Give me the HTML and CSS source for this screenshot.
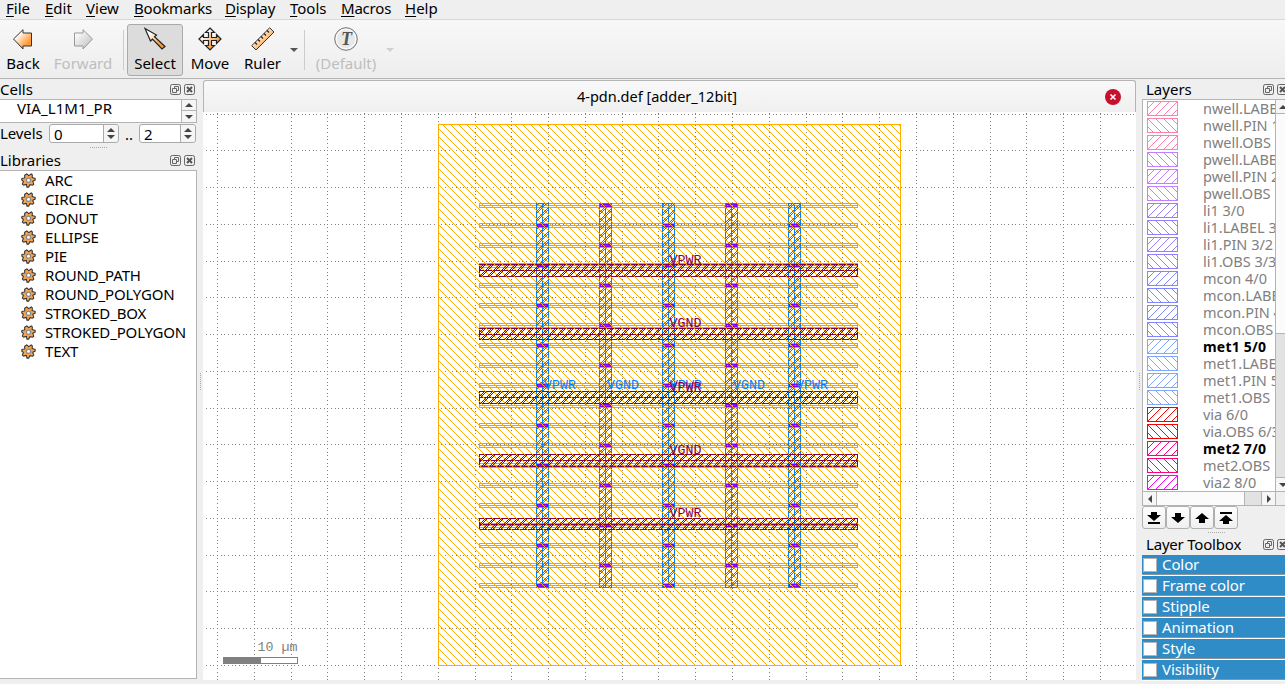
FILE: index.html
```
<!DOCTYPE html>
<html lang="en">
<head>
<meta charset="utf-8">
<title>4-pdn.def [adder_12bit]</title>
<link rel="stylesheet" href="styles.css">
</head>
<body>
<svg class="defs" width="0" height="0">
  <defs>
    <linearGradient id="og" x1="0" y1="0" x2="1" y2="1"><stop offset=".25" stop-color="#fff"/><stop offset=".75" stop-color="#ff9933"/></linearGradient>
    <linearGradient id="gg" x1="0" y1="0" x2="1" y2="1"><stop offset=".1" stop-color="#fff"/><stop offset="1" stop-color="#bbb"/></linearGradient>
    <symbol id="gear" viewBox="0 0 14 14"><path d="M5.4.8 7.2 2.5 9.6.9l1 .9-.2 2.4 2.8.8v1.6l-2.2 1.2.9 2.6-1 1-2.5-.5-1.3 2.3H5.6L5 10.7l-2.6.6-1.1-1 .9-2.4L.7 6.5l.2-1.4 2.6-.5-.1-2.5z" fill="#f5a452" stroke="#333" stroke-width="1"/><circle cx="7" cy="6.700" r="2" fill="#fff" stroke="#888" stroke-width="1.200"/></symbol>
    <symbol id="float" viewBox="0 0 11 11"><rect x=".5" y=".5" width="10" height="10" rx="1.8" fill="none" stroke="#666"/><path d="M4.5 4.5v-2h4v4h-2M2.5 4.5h4v4h-4z" fill="none" stroke="#666"/></symbol>
    <symbol id="close" viewBox="0 0 11 11"><rect x=".5" y=".5" width="10" height="10" rx="1.8" fill="none" stroke="#666"/><path d="M3 3l5 5M8 3l-5 5" fill="none" stroke="#555" stroke-width="2"/></symbol>
    <symbol id="fwd" viewBox="0 0 31 15"><path d="M1 7l6-6M1 14 14 1M9 14 22 1M17 14 30 1M25 14l5-5" fill="none" stroke="currentColor" shape-rendering="crispEdges"/><rect x=".5" y=".5" width="30" height="14" fill="none" stroke="currentColor"/></symbol>
    <symbol id="bwd" viewBox="0 0 31 15"><path d="M1 9l5 5M1 1l13 13M9 1l13 13M17 1l13 13M25 1l5 5" fill="none" stroke="currentColor" shape-rendering="crispEdges"/><rect x=".5" y=".5" width="30" height="14" fill="none" stroke="currentColor"/></symbol>
  </defs>
</svg>
<div class="app">
  <nav class="menu">
    <span class="m1"><u>F</u>ile</span><span class="m2"><u>E</u>dit</span><span class="m3"><u>V</u>iew</span><span class="m4"><u>B</u>ookmarks</span><span class="m5"><u>D</u>isplay</span><span class="m6"><u>T</u>ools</span><span class="m7"><u>M</u>acros</span><span class="m8"><u>H</u>elp</span>
  </nav>
  <div class="toolbar">
    <div class="tool back"><svg width="24" height="24"><path d="M2.5 12 12 2.7V6h8.5v13H12v3z" fill="url(#og)" stroke="#333"/></svg><span>Back</span></div>
    <div class="tool forward off"><svg width="24" height="24"><path d="M21.500 12 12 2.700V6H3.500v13H12v3z" fill="url(#gg)" stroke="#999"/></svg><span>Forward</span></div>
    <i class="sep"></i>
    <div class="tool select"><svg width="24" height="24"><path d="M2 1.500 13.500 8 11.500 9.800 22 19.500 19 22 9.500 12.200 7.500 14z" fill="url(#og)" stroke="#222" stroke-width="1.200"/></svg><span>Select</span></div>
    <div class="tool move"><svg width="24" height="24"><path d="M12 1l4.500 4.500h-3v5h5v-3L23 12l-4.500 4.500v-3h-5v5h3L12 23l-4.500-4.500h3v-5h-5v3L1 12l4.500-4.500v3h5v-5h-3z" fill="url(#og)" stroke="#222" stroke-width="1.200"/></svg><span>Move</span></div>
    <div class="tool ruler"><svg width="24" height="24"><path d="M.700 18.700 18.700.800 23 5 5 23z" fill="url(#og)" stroke="#333"/><path d="M4 15.500l2 2M7 12.500l2 2M10 9.500l2 2M13 6.500l2 2M16 3.500l2 2" stroke="#222" stroke-width="1.200"/></svg><span>Ruler</span></div>
    <i class="drop"></i>
    <i class="sep sep2"></i>
    <div class="tool default off"><svg width="26" height="26"><circle cx="13" cy="13" r="11.300" fill="#e8e8e8" stroke="#777"/><circle cx="13" cy="13" r="9.700" fill="none" stroke="#fff"/><text x="13.500" y="19" class="tee">T</text></svg><span>(Default)</span></div>
    <i class="drop pale"></i>
  </div>
  <div class="main">
    <aside class="left">
      <div class="title t1"><span>Cells</span><svg width="11" height="11"><use href="#float"/></svg><svg width="11" height="11"><use href="#close"/></svg></div>
      <div class="cells"><span>VIA_L1M1_PR</span><div class="updown"><b><i class="up"></i></b><b><i class="down"></i></b></div></div>
      <div class="levels"><span class="lab">Levels</span><div class="spin s1">0<em><i class="up"></i><i class="down"></i></em></div><span class="dots">..</span><div class="spin s2">2<em><i class="up"></i><i class="down"></i></em></div></div>
      <div class="grip"><i></i></div>
      <div class="title t2"><span>Libraries</span><svg width="11" height="11"><use href="#float"/></svg><svg width="11" height="11"><use href="#close"/></svg></div>
      <ul class="libs">
        <li><svg width="15" height="15"><use href="#gear"/></svg>ARC</li>
        <li><svg width="15" height="15"><use href="#gear"/></svg>CIRCLE</li>
        <li><svg width="15" height="15"><use href="#gear"/></svg>DONUT</li>
        <li><svg width="15" height="15"><use href="#gear"/></svg>ELLIPSE</li>
        <li><svg width="15" height="15"><use href="#gear"/></svg>PIE</li>
        <li><svg width="15" height="15"><use href="#gear"/></svg>ROUND_PATH</li>
        <li><svg width="15" height="15"><use href="#gear"/></svg>ROUND_POLYGON</li>
        <li><svg width="15" height="15"><use href="#gear"/></svg>STROKED_BOX</li>
        <li><svg width="15" height="15"><use href="#gear"/></svg>STROKED_POLYGON</li>
        <li><svg width="15" height="15"><use href="#gear"/></svg>TEXT</li>
      </ul>
    </aside>
    <div class="vgrip v1"><i></i></div>
    <section class="center">
      <div class="tab"><span>4-pdn.def [adder_12bit]</span><svg width="16" height="16"><circle cx="8" cy="8" r="8" fill="#c8102e"/><path d="M5.500 5.500l5 5M10.500 5.500l-5 5" stroke="#fff" stroke-width="1.500"/></svg></div>
      <svg id="view" width="933" height="568" viewBox="203 112 933 568" shape-rendering="crispEdges">
        <path id="grid" fill="#808080"/>
        <g id="shapes" fill="none"></g>
        <path id="boundary" fill="#ffae00"/>
        <rect x="438.500" y="124.500" width="462" height="541" fill="none" stroke="#ffae00"/>
        <g class="net blue"><text x="544" y="389">VPWR</text><text x="607" y="389">VGND</text><text x="670" y="389">VPWR</text><text x="733" y="389">VGND</text><text x="796" y="389">VPWR</text></g>
        <g class="net maroon"><text x="669.500" y="264">VPWR</text><text x="669.500" y="327">VGND</text><text x="669.500" y="391">VPWR</text><text x="669.500" y="454">VGND</text><text x="669.500" y="517">VPWR</text></g>
        <text class="scale" x="257.500" y="651">10 µm</text>
        <rect x="223.500" y="657.500" width="74" height="6" fill="#fff" stroke="#808080"/><rect x="223" y="657" width="38" height="7" fill="#808080"/>
      </svg>
    </section>
    <div class="vgrip v2"><i></i></div>
    <aside class="right">
      <div class="title t3"><span>Layers</span><svg width="11" height="11"><use href="#float"/></svg><svg width="11" height="11"><use href="#close"/></svg></div>
      <div class="layerbox">
        <ul class="layers">
          <li class="nw"><svg><use href="#fwd"/></svg><span>nwell.LABEL</span></li>
          <li class="nw"><svg><use href="#bwd"/></svg><span>nwell.PIN 1/2</span></li>
          <li class="nw"><svg><use href="#fwd"/></svg><span>nwell.OBS</span></li>
          <li class="pw"><svg><use href="#bwd"/></svg><span>pwell.LABEL</span></li>
          <li class="pw"><svg><use href="#fwd"/></svg><span>pwell.PIN 2/2</span></li>
          <li class="pw"><svg><use href="#bwd"/></svg><span>pwell.OBS</span></li>
          <li class="li"><svg><use href="#fwd"/></svg><span>li1 3/0</span></li>
          <li class="li"><svg><use href="#bwd"/></svg><span>li1.LABEL 3/1</span></li>
          <li class="li"><svg><use href="#fwd"/></svg><span>li1.PIN 3/2</span></li>
          <li class="li"><svg><use href="#bwd"/></svg><span>li1.OBS 3/3</span></li>
          <li class="mc"><svg><use href="#fwd"/></svg><span>mcon 4/0</span></li>
          <li class="mc"><svg><use href="#bwd"/></svg><span>mcon.LABEL</span></li>
          <li class="mc"><svg><use href="#fwd"/></svg><span>mcon.PIN 4/2</span></li>
          <li class="mc"><svg><use href="#bwd"/></svg><span>mcon.OBS</span></li>
          <li class="me on"><svg><use href="#fwd"/></svg><span>met1 5/0</span></li>
          <li class="me"><svg><use href="#bwd"/></svg><span>met1.LABEL</span></li>
          <li class="me"><svg><use href="#fwd"/></svg><span>met1.PIN 5/2</span></li>
          <li class="me"><svg><use href="#bwd"/></svg><span>met1.OBS</span></li>
          <li class="vi"><svg><use href="#fwd"/></svg><span>via 6/0</span></li>
          <li class="vi"><svg><use href="#bwd"/></svg><span>via.OBS 6/3</span></li>
          <li class="m2c on"><svg><use href="#fwd"/></svg><span>met2 7/0</span></li>
          <li class="m2c"><svg><use href="#bwd"/></svg><span>met2.OBS</span></li>
          <li class="v2c"><svg><use href="#fwd"/></svg><span>via2 8/0</span></li>
        </ul>
        <div class="vbar"><b><i class="up"></i></b><div class="thumb"></div><div class="groove"></div><b class="dn"><i class="down"></i></b></div>
      </div>
      <div class="hbar"><b><i class="lt"></i></b><div class="hthumb"></div><div class="hgroove"></div><b><i class="rt"></i></b><div class="corner"></div></div>
      <div class="btns">
        <span><svg width="14" height="14"><path d="M4 1h6v3h4L7 10 0 4h4zM1 11h12v2H1z"/></svg></span>
        <span><svg width="14" height="14"><path d="M4 2h6v4h4l-7 6-7-6h4z"/></svg></span>
        <span><svg width="14" height="14"><path d="M4 12h6V8h4L7 2 0 8h4z"/></svg></span>
        <span><svg width="14" height="14"><path d="M4 13h6v-3h4L7 4l-7 6h4zM1 1h12v2H1z"/></svg></span>
      </div>
      <div class="grip g2"><i></i></div>
      <div class="title t4"><span>Layer Toolbox</span><svg width="11" height="11"><use href="#float"/></svg><svg width="11" height="11"><use href="#close"/></svg></div>
      <div class="box"><i></i>Color</div>
      <div class="box"><i></i>Frame color</div>
      <div class="box"><i></i>Stipple</div>
      <div class="box"><i></i>Animation</div>
      <div class="box"><i></i>Style</div>
      <div class="box"><i></i>Visibility</div>
    </aside>
  </div>
</div>
<script src="view.js"></script>
</body>
</html>
```

FILE: styles.css
```
* { box-sizing: border-box; }
body { margin: 0; background: #efefef; color: #000; font: 15px/19px "Noto Sans", "Open Sans", sans-serif; overflow: hidden; }
svg { display: block; flex: none; }
ul { list-style: none; margin: 0; padding: 0; }
.defs { position: absolute; }
.app { width: 1285px; height: 684px; display: flex; flex-direction: column; overflow: hidden; }
.menu { height: 19px; display: flex; padding-left: 6px; line-height: 16px; white-space: nowrap; }
.menu u { text-underline-offset: 2px; }
.menu span { flex: none; }
.m1 { width: 39px; } .m2 { width: 41px; } .m3 { width: 48px; } .m4 { width: 91px; letter-spacing: -.2px; } .m5 { width: 65px; letter-spacing: -.15px; } .m6 { width: 51px; } .m7 { width: 64px; letter-spacing: -.2px; }
.toolbar { height: 60px; flex: none; display: flex; border-top: 1px solid #d8d8d8; border-bottom: 1px solid #b4b4b4; background: linear-gradient(#f8f8f8, #ededed); padding-top: 4px; }
.tool { height: 52px; display: flex; flex-direction: column; align-items: center; padding-top: 2px; flex: none; border: 1px solid transparent; }
.tool svg { height: 26px; }
.tool span { line-height: 19px; margin-top: 1px; white-space: nowrap; }
.back { width: 46px; } .forward { width: 74px; } .select { width: 56px; background: #dcdcdc; border-color: #aaa; border-radius: 3px; }
.move { width: 54px; } .ruler { width: 51px; } .default { width: 76px; margin-left: 3px; }
.default svg { margin-top: -1px; margin-bottom: 1px; }
.off { color: #bebebe; }
.tee { font: italic bold 18px "Liberation Serif", serif; fill: #555; text-anchor: middle; }
.sep { width: 1px; height: 40px; margin: 6px 3px 0 3px; background: #ccc; }
.sep2 { margin: 6px 0 0 6px; }
.drop { width: 0; height: 0; border: 4px solid transparent; border-top-color: #555; border-bottom: 0; margin: 24px 0 0 2px; }
.pale { border-top-color: #d0d0d0; margin-left: 2px; }
.main { display: flex; flex: none; height: 605px; }
.left { width: 197px; flex: none; display: flex; flex-direction: column; }
.title { display: flex; align-items: center; gap: 3px; flex: none; line-height: 20px; white-space: nowrap; }
.title span { flex: 1; }
.t1 { height: 20px; padding-right: 2px; }
.cells { height: 24px; border: 1px solid #b4b4b4; border-left: 0; background: #fff; display: flex; }
.cells span { flex: 1; padding-left: 17px; line-height: 17px; letter-spacing: .1px; }
.updown { width: 15px; border-left: 1px solid #b4b4b4; display: flex; flex-direction: column; background: #f5f5f5; }
.updown b { height: 10px; display: flex; align-items: center; justify-content: center; }
.updown b + b { border-top: 1px solid #b4b4b4; height: 12px; }
.up, .down, .lt, .rt { width: 0; height: 0; border: 4px solid transparent; display: block; }
.up { border-bottom-color: #444; border-top: 0; }
.down { border-top-color: #444; border-bottom: 0; }
.lt { border-right: 4px solid #444; border-left: 0; }
.rt { border-left: 4px solid #444; border-right: 0; }
.levels { height: 22px; display: flex; align-items: center; line-height: 18px; }
.lab { width: 49px; padding-bottom: 2px; letter-spacing: -.1px; }
.spin { height: 19px; border: 1px solid #aaa; border-radius: 3px; background: #fff; display: flex; justify-content: space-between; padding-left: 4px; line-height: 18px; margin-top: -1px; }
.s1 { width: 70px; } .s2 { width: 57px; }
.dots { width: 20px; text-align: center; }
.spin em { width: 15px; border-left: 1px solid #aaa; background: #f5f5f5; border-radius: 0 3px 3px 0; display: flex; flex-direction: column; align-items: center; justify-content: center; gap: 3px; }
.grip { height: 5px; display: flex; justify-content: center; align-items: center; flex: none; }
.grip i { width: 17px; border-top: 1px dotted #aaa; }
.t2 { height: 20px; padding-right: 2px; }
.libs { height: 509px; background: #fff; border: 1px solid #b4b4b4; border-left: 0; }
.libs li { height: 19px; display: flex; align-items: center; gap: 9px; padding-left: 21px; letter-spacing: -.15px; line-height: 19px; white-space: nowrap; }
.vgrip { width: 6px; flex: none; display: flex; align-items: center; justify-content: center; }
.vgrip i { height: 17px; border-left: 1px dotted #aaa; }
.center { width: 933px; flex: none; }
.tab { height: 33px; display: flex; align-items: center; border: 1px solid #b4b4b4; border-bottom: 0; border-radius: 3px 3px 0 0; background: linear-gradient(#f9f9f9, #efefef); padding-right: 14px; margin-top: 1px; font-size: 14.5px; line-height: 18px; }
.tab span { flex: 1; text-align: center; padding: 0 0 2px 5px; }
#view { background: #fff; margin-top: -1px; }
.net { font: 13.3px "Liberation Mono", monospace; }
.blue { fill: #0080ff; } .maroon { fill: #800057; }
.scale { font: 13.3px "Liberation Mono", monospace; fill: #808080; }
.right { width: 143px; flex: none; overflow: hidden; display: flex; flex-direction: column; }
.t3, .t4 { height: 20px; width: 146px; padding-left: 4px; }
.t4 { letter-spacing: -.2px; line-height: 18px; }
.t4 span { padding-bottom: 2px; }
.t4 svg { margin-top: -1px; }
.layerbox { height: 392px; flex: none; display: flex; border-top: 1px solid #b4b4b4; border-left: 1px solid #b4b4b4; background: #fff; overflow: hidden; }
.layers { width: 132px; padding-top: 1px; overflow: hidden; flex: none; }
.layers li { height: 17px; display: flex; padding-left: 4px; white-space: nowrap; }
.layers svg { width: 31px; height: 15px; }
.layers span { color: #808080; padding-left: 25px; line-height: 15px; font-size: 14.5px; }
.layers .on span { color: #000; font-weight: bold; letter-spacing: .2px; font-size: 14px; }
.nw { color: #ff80a8; } .pw { color: #c080ff; } .li { color: #9580ff; } .mc { color: #8086ff; } .me { color: #80a8ff; } .vi { color: #ff0000; } .m2c { color: #ff0080; } .v2c { color: #ff00ff; }
.vbar { width: 14px; flex: none; border-left: 1px solid #b4b4b4; display: flex; flex-direction: column; background: #f6f6f6; }
.vbar b { height: 14px; display: flex; align-items: center; justify-content: center; border-bottom: 1px solid #b4b4b4; }
.thumb { height: 220px; background: #fbfbfb; border-bottom: 1px solid #b4b4b4; }
.groove { flex: 1; background: #e2e2e2; }
.vbar .dn { border-top: 1px solid #b4b4b4; border-bottom: 0; }
.hbar { height: 15px; flex: none; display: flex; border: 1px solid #b4b4b4; border-right: 0; background: #f6f6f6; }
.hbar b { width: 13px; display: flex; align-items: center; justify-content: center; }
.hthumb { width: 89px; background: #fbfbfb; border: 1px solid #b4b4b4; border-width: 0 1px; }
.hgroove { width: 17px; background: #e2e2e2; border-right: 1px solid #b4b4b4; }
.corner { flex: 1; border-left: 1px solid #b4b4b4; background: #efefef; }
.btns { height: 23px; flex: none; display: flex; }
.btns span { width: 24px; height: 23px; border: 1px solid #b0b0b0; border-radius: 3px; background: linear-gradient(#fdfdfd, #f0f0f0); display: flex; align-items: center; justify-content: center; }
.g2 { height: 6px; padding-left: 6px; }
.box { height: 20px; flex: none; margin-bottom: 1px; background: #308cc6; color: #fff; display: flex; align-items: center; gap: 5px; padding-left: 1px; letter-spacing: -.1px; border-bottom: 1px solid #8f9499; box-shadow: 0 1px #fff; }
.box i { width: 14px; height: 14px; background: #fff; border: 1px solid #b4b4b4; }
```

FILE: view.js
```
// Pixels of a diagonal stipple inside a rectangle
function hatch(x0, y0, w, h, test) {
  let d = '';
  for (let y = y0; y < y0 + h; y++) for (let x = x0; x < x0 + w; x++) if (test(x, y)) d += `M${x} ${y}h1v1h-1z`;
  return d;
}
document.getElementById('boundary').setAttribute('d', hatch(438, 124, 462, 541, (x, y) => (x - y + 800) % 8 === 6));

// Dotted 5 µm grid, ten dots per cell
const step = 36.8, sy = 36.75;
let g = '';
const dot = (x, y) => { g += `M${Math.floor(x)} ${Math.floor(y)}h1v1h-1z`; };
for (let x = 217.4; x < 1136; x += step) for (let y = 114 - sy; y < 680; y += sy / 10) if (y > 112) dot(x, y);
for (let y = 114; y < 680; y += sy) for (let x = 217.4 - step; x < 1136; x += step / 10) if (x >= 203) dot(x, y);
document.getElementById('grid').setAttribute('d', g);

let s = '';
const frame = (x, y, w, h, c) => `<rect x="${x + .5}" y="${y + .5}" width="${w - 1}" height="${h - 1}" stroke="${c}"/>`;
const fill = (x, y, w, h, c) => `<rect x="${x}" y="${y}" width="${w}" height="${h}" fill="${c}"/>`;
const shade = (x, y, w, h, c, a, b) => `<path fill="${c}" d="${hatch(x, y, w, h, (i, j) => (i + j) % 8 === a || (i + j) % 8 === b)}"/>`;
// met1 rails
for (let i = 0; i < 20; i++) {
  const y = 203 + i * 20;
  s += frame(479, y, 379, 5, '#80a8ff') + fill(479, y + 2, 379, 1, '#80a8ff');
}
// vertical straps with their vias
[536, 599, 662, 725, 788].forEach((x, k) => {
  s += shade(x, 203, 13, 385, '#0080ff', 3, 5) + frame(x, 203, 13, 385, '#0080ff') + fill(x + 6, 203, 1, 385, '#0080ff');
  for (let y = k % 2 ? 204 : 224; y < 588; y += 40) s += frame(x + 1, y, 11, 3, '#8000ff') + fill(x + 3, y + 1, 3, 1, '#c000ff') + fill(x + 8, y + 1, 3, 1, '#c000ff');
});
// horizontal straps
[264, 328, 391, 454, 518].forEach((y, k) => {
  const h = k === 1 || k === 4 ? 12 : 13;
  s += shade(479, y, 379, h, '#800057', 3, 5) + frame(479, y, 379, h, '#800057') + fill(479, y + 6, 379, 1, '#800057');
});
document.getElementById('shapes').innerHTML = s;
```
